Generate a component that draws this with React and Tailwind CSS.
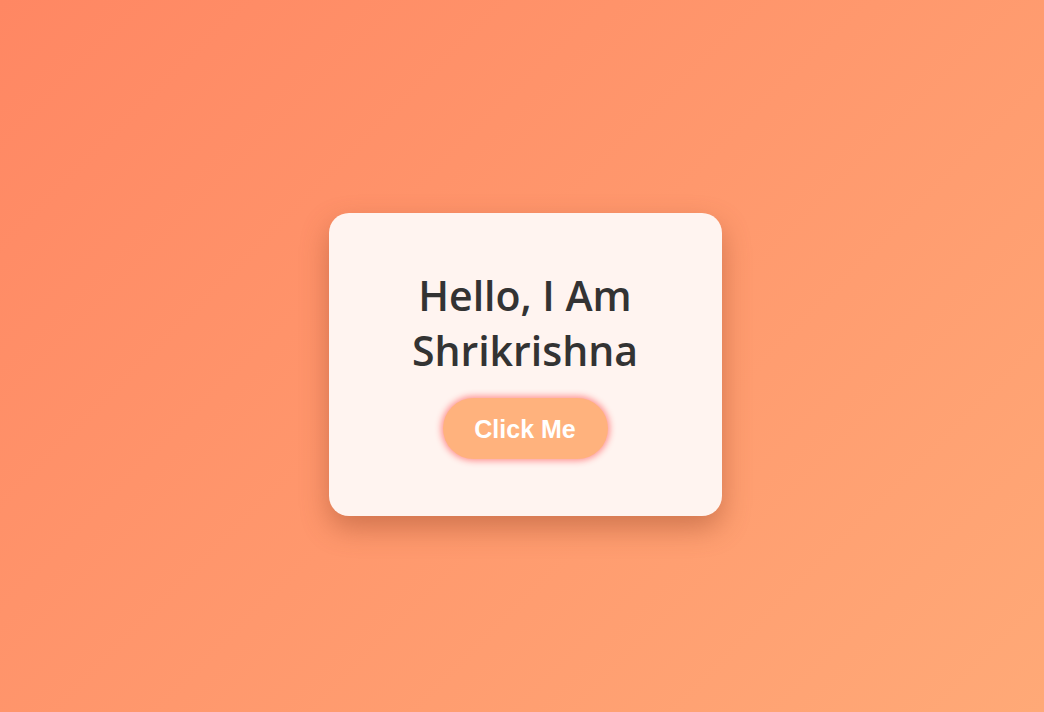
export default function App() {
  return (
    <div className="w-full min-h-screen h-[712px] flex items-center justify-center bg-[linear-gradient(135deg,#ff8763,#ffa977)]">
      <div className="ml-[6px] mt-[16px] w-[393px] h-[303px] rounded-[20px] bg-[#fff4f0] shadow-[0_12px_28px_rgba(150,70,40,0.45)] flex flex-col items-center justify-center text-center">
        <h1 className="text-[#333333] text-[41px] leading-[55px] font-semibold font-['Open_Sans',sans-serif] mt-[-2px]">
          Hello, I Am
          <br />
          Shrikrishna
        </h1>
        <button className="mt-[20px] w-[165px] h-[61px] pt-[3px] rounded-full bg-[#ffb27d] text-white text-[25px] font-bold font-['Liberation_Sans',Arial,sans-serif] shadow-[0_0_6px_2px_#ff9494]">
          Click Me
        </button>
      </div>
    </div>
  );
}
